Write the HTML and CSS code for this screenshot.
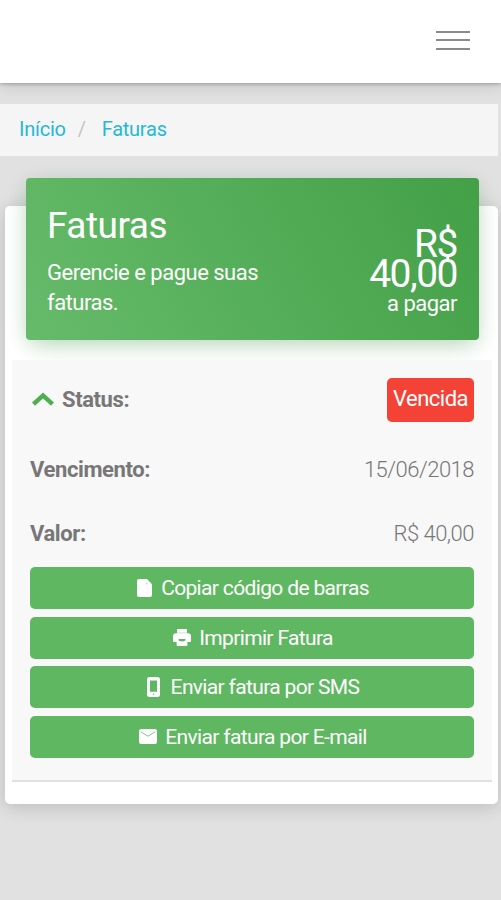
FILE: index.html
```html
<!DOCTYPE html>
<html lang="pt-BR">
<head>
    <meta charset="UTF-8">
    <meta name="viewport" content="width=device-width, initial-scale=1.0">
    <title>Faturas</title>
    <link rel="stylesheet" href="styles.css">
</head>
<body>

    <header class="navbar">
        <button class="menu-btn" aria-label="Menu">
            <span></span>
            <span></span>
            <span></span>
        </button>
    </header>

    <nav class="breadcrumb">
        <a href="#">Início</a>
        <span class="divider">/</span>
        <a href="#">Faturas</a>
    </nav>

    <main class="card">
        <div class="card-header">
            <div class="header-text">
                <h1>Faturas</h1>
                <p>Gerencie e pague suas faturas.</p>
            </div>
            <div class="header-total">
                <div class="amount">R$ 40,00</div>
                <div class="amount-label">a pagar</div>
            </div>
        </div>

        <div class="invoice">
            <div class="row row-status">
                <span class="label">
                    <svg class="chevron" viewBox="0 0 22 14"><path d="M1.5 12.2 L11 3.4 L20.5 12.2" fill="none" stroke="#4caf50" stroke-width="4.4"/></svg>
                    Status:
                </span>
                <span class="badge">Vencida</span>
            </div>
            <div class="row row-date">
                <span class="label">Vencimento:</span>
                <span class="value">15/06/2018</span>
            </div>
            <div class="row row-value">
                <span class="label">Valor:</span>
                <span class="value">R$ 40,00</span>
            </div>

            <div class="actions">
                <button class="btn">
                    <svg class="icon icon-file" viewBox="0 0 15 18"><path d="M2 0h8l5 5.2V16a2 2 0 0 1-2 2H2a2 2 0 0 1-2-2V2a2 2 0 0 1 2-2z" fill="#fff"/><circle cx="9.6" cy="4.8" r=".8" fill="#a5d6a7"/></svg>
                    <span>Copiar código de barras</span>
                </button>
                <button class="btn">
                    <svg class="icon icon-print" viewBox="0 0 18 17"><path d="M4 0h10v4.2h1a3 3 0 0 1 3 3V12a1 1 0 0 1-1 1h-2.6v3a1 1 0 0 1-1 1H4.6a1 1 0 0 1-1-1v-3H1a1 1 0 0 1-1-1V7.2a3 3 0 0 1 3-3h1z" fill="#fff"/><path d="M4 3.9h10" stroke="#a5d6a7" stroke-width=".6"/><path d="M5.6 10h6.8v1.5q-3.4 2-6.8 0z" fill="#5fb762"/></svg>
                    <span>Imprimir Fatura</span>
                </button>
                <button class="btn">
                    <svg class="icon icon-phone" viewBox="0 0 13 20"><path fill-rule="evenodd" d="M2.5 0h8A2.5 2.5 0 0 1 13 2.5v15a2.5 2.5 0 0 1-2.5 2.5h-8A2.5 2.5 0 0 1 0 17.5v-15A2.5 2.5 0 0 1 2.5 0zM3 3.6v11.2h7V3.6z" fill="#fff"/><circle cx="6.5" cy="17.3" r=".7" fill="#5fb762"/></svg>
                    <span>Enviar fatura por SMS</span>
                </button>
                <button class="btn">
                    <svg class="icon icon-mail" viewBox="0 0 18 15"><rect width="18" height="15" rx="2" fill="#fff"/><path d="M1.8 2.8L9 7.2l7.2-4.4" fill="none" stroke="#81c784" stroke-width="1"/></svg>
                    <span>Enviar fatura por E-mail</span>
                </button>
            </div>
        </div>
    </main>

</body>
</html>
```

FILE: styles.css
```css
* {
    box-sizing: border-box;
}

body {
    margin: 0;
    min-height: 900px;
    background-color: #e1e1e1;
    font-family: Roboto, "Liberation Sans", sans-serif;
    font-size: 22px;
    font-weight: 400;
    letter-spacing: -0.5px;
    color: #777;
    overflow: hidden;
}

h1,
p {
    margin: 0;
    font-weight: 400;
}

.navbar {
    height: 83px;
    padding: 30.5px 31px 0 0;
    background-color: #fff;
    display: flex;
    justify-content: flex-end;
    align-items: flex-start;
    box-shadow: 0 1px 4px rgba(0, 0, 0, 0.28), 0 4px 16px rgba(0, 0, 0, 0.1);
}

.menu-btn {
    width: 34px;
    padding: 0;
    border: none;
    background: none;
    display: flex;
    flex-direction: column;
    gap: 6.6px;
}

.menu-btn span {
    height: 2px;
    background-color: #8a8a8a;
}

.breadcrumb {
    margin: 21px 3px 0 0;
    height: 52px;
    padding: 0 19px 2px;
    background-color: #f5f5f5;
    display: flex;
    align-items: center;
    font-size: 20px;
    letter-spacing: -0.25px;
}

.breadcrumb a {
    color: #26b8d4;
    text-decoration: none;
}

.breadcrumb .divider {
    color: #c4c4c4;
    padding: 0 16px 0 12px;
}

.card {
    margin: 50px 3px 0 5px;
    height: 598px;
    padding: 0 6px 0 7px;
    background-color: #fff;
    border-radius: 5px;
    box-shadow: 0 3px 18px rgba(0, 0, 0, 0.17);
    display: flow-root;
}

.card-header {
    margin: -28px 13px 0 14px;
    height: 162px;
    padding: 0 21px;
    border-radius: 4px;
    color: #fff;
    background: linear-gradient(60deg, #66bb6a, #43a047);
    box-shadow: 0 8px 24px -6px rgba(76, 175, 80, 0.4), 0 4px 20px rgba(0, 0, 0, 0.08);
    display: flex;
    justify-content: space-between;
}

.header-text {
    width: 240px;
}

.header-text h1 {
    padding-top: 28px;
    font-size: 37px;
    line-height: 40px;
    letter-spacing: -0.5px;
}

.header-text p {
    padding-top: 12px;
    line-height: 30px;
}

.header-total {
    width: 100px;
    padding-top: 51px;
    text-align: right;
}

.amount {
    padding-right: 1px;
    font-size: 39px;
    line-height: 30px;
    letter-spacing: -1.5px;
}

.amount-label {
    padding-right: 1px;
    line-height: 29px;
}

.invoice {
    margin-top: 20px;
    height: 422px;
    padding: 0 18px;
    background-color: #f8f8f8;
    border-bottom: 2px solid #e1e1e1;
}

.row {
    display: flex;
    justify-content: space-between;
    align-items: center;
}

.row-status {
    height: 80px;
}

.row-date {
    height: 60px;
    padding-bottom: 1px;
}

.row-value {
    height: 67px;
}

.label {
    font-weight: 700;
    letter-spacing: -0.4px;
    display: flex;
    align-items: center;
}

.row-status .label {
    padding-bottom: 2px;
}

.chevron {
    width: 22px;
    height: 14px;
    margin: 0 8px 0 2px;
}

.value {
    font-weight: 300;
}

.badge {
    width: 87px;
    height: 44px;
    text-align: center;
    line-height: 42px;
    color: #fff;
    background-color: #f44336;
    border-radius: 5px;
}

.actions {
    display: grid;
    gap: 7.5px;
}

.btn {
    height: 42px;
    padding: 0 0 0 2px;
    border: none;
    border-radius: 5px;
    background-color: #5fb762;
    color: #fff;
    font-family: inherit;
    font-size: 21px;
    letter-spacing: -0.65px;
    display: flex;
    justify-content: center;
    align-items: center;
}

.icon {
    flex: none;
}

.icon-file {
    width: 15px;
    height: 18px;
    margin-right: 9px;
}

.icon-print {
    width: 18px;
    height: 17px;
    margin-right: 8px;
}

.icon-phone {
    width: 13px;
    height: 20px;
    margin-right: 11px;
}

.icon-mail {
    width: 18px;
    height: 15px;
    margin-right: 8px;
}
```
